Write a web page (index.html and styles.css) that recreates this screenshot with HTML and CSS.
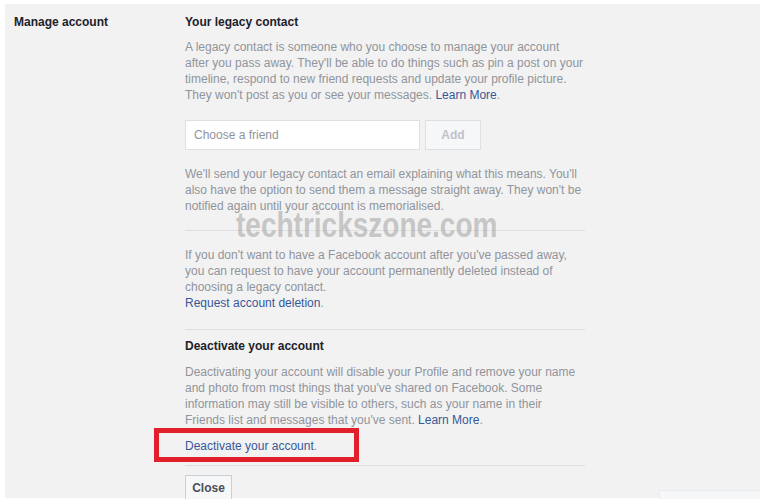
FILE: index.html
```html
<!DOCTYPE html>
<html>
<head>
<meta charset="utf-8">
<link rel="stylesheet" href="styles.css">
</head>
<body>
<div class="panel">
  <div class="label">Manage account</div>
  <div class="content">
    <div class="heading">Your legacy contact</div>
    <p class="text t1">A legacy contact is someone who you choose to manage your account after you pass away. They'll be able to do things such as pin a post on your timeline, respond to new friend requests and update your profile picture. They won't post as you or see your messages. <a class="link">Learn More</a>.</p>
    <div class="chooser">
      <div class="input">Choose a friend</div>
      <div class="add">Add</div>
    </div>
    <p class="text t2">We'll send your legacy contact an email explaining what this means. You'll also have the option to send them a message straight away. They won't be notified again until your account is memorialised.</p>
    <div class="sep s1"></div>
    <p class="text t3">If you don't want to have a Facebook account after you've passed away, you can request to have your account permanently deleted instead of choosing a legacy contact.<br><a class="link">Request account deletion</a>.</p>
    <div class="sep s2"></div>
    <div class="heading h2">Deactivate your account</div>
    <p class="text t4">Deactivating your account will disable your Profile and remove your name and photo from most things that you've shared on Facebook. Some information may still be visible to others, such as your name in their Friends list and messages that you've sent. <a class="link">Learn More</a>.</p>
    <p class="text t5"><a class="link">Deactivate your account</a>.</p>
    <div class="sep s3"></div>
    <div class="close">Close</div>
    <div class="redbox"></div>
    <div class="watermark">techtrickszone.com</div>
  </div>
</div>
<div class="chatbar"></div>
</body>
</html>
```
FILE: styles.css
```css
html, body {
  margin: 0;
  padding: 0;
  background: #ffffff;
  overflow: hidden;
}
body {
  width: 760px;
  height: 499px;
  font-family: "Liberation Sans", Arial, sans-serif;
  font-size: 12px;
  line-height: 16px;
}
.panel {
  margin: 4px 0 0 5px;
  height: 494px;
  background: #f2f2f2;
  display: flex;
  padding: 10px 0 0 9px;
  box-sizing: border-box;
}
.label {
  width: 171px;
  font-weight: bold;
  color: #1d2129;
}
.content {
  width: 400px;
  position: relative;
}
.heading {
  font-weight: bold;
  color: #1d2129;
}
.text {
  margin: 0;
  color: #90949c;
}
.link {
  color: #365899;
  text-decoration: none;
}
.t1 { margin-top: 9px; }
.chooser {
  display: flex;
  gap: 5px;
  margin-top: 17px;
}
.input {
  width: 235px;
  height: 30px;
  box-sizing: border-box;
  background: #ffffff;
  border: 1px solid #dddfe2;
  color: #90949c;
  padding-left: 8px;
  line-height: 28px;
}
.add {
  width: 56px;
  height: 30px;
  box-sizing: border-box;
  background: #f6f7f9;
  border: 1px solid #dddfe2;
  color: #bec3c9;
  font-weight: bold;
  text-align: center;
  line-height: 28px;
}
.t2 { margin-top: 16px; }
.sep {
  height: 1px;
  background: #dddfe2;
}
.s1 { margin-top: 16px; }
.t3 { margin-top: 16px; }
.s2 { margin-top: 18px; }
.h2 { margin-top: 8px; }
.t4 { margin-top: 10px; }
.t5 { margin-top: 10px; }
.redbox {
  position: absolute;
  left: -31px;
  top: 414px;
  width: 205px;
  height: 34px;
  box-sizing: border-box;
  border: 5px solid #e2202b;
}
.s3 { margin-top: 11px; }
.close {
  margin-top: 9px;
  width: 47px;
  height: 26px;
  box-sizing: border-box;
  background: #f6f7f9;
  border: 1px solid #ccd0d5;
  color: #4b4f56;
  font-weight: bold;
  text-align: center;
  line-height: 24px;
}
.watermark {
  position: absolute;
  left: 51px;
  top: 191px;
  font-family: "Liberation Sans", Arial, sans-serif;
  font-weight: bold;
  font-size: 35px;
  line-height: 40px;
  color: rgba(160, 160, 160, 0.55);
  white-space: nowrap;
  transform: scaleX(0.8);
  transform-origin: left top;
}
.chatbar {
  position: absolute;
  left: 659px;
  top: 490px;
  width: 101px;
  height: 9px;
  background: #f6f7f9;
  border-top: 1px solid #e9ebee;
  border-left: 1px solid #e9ebee;
}
```
